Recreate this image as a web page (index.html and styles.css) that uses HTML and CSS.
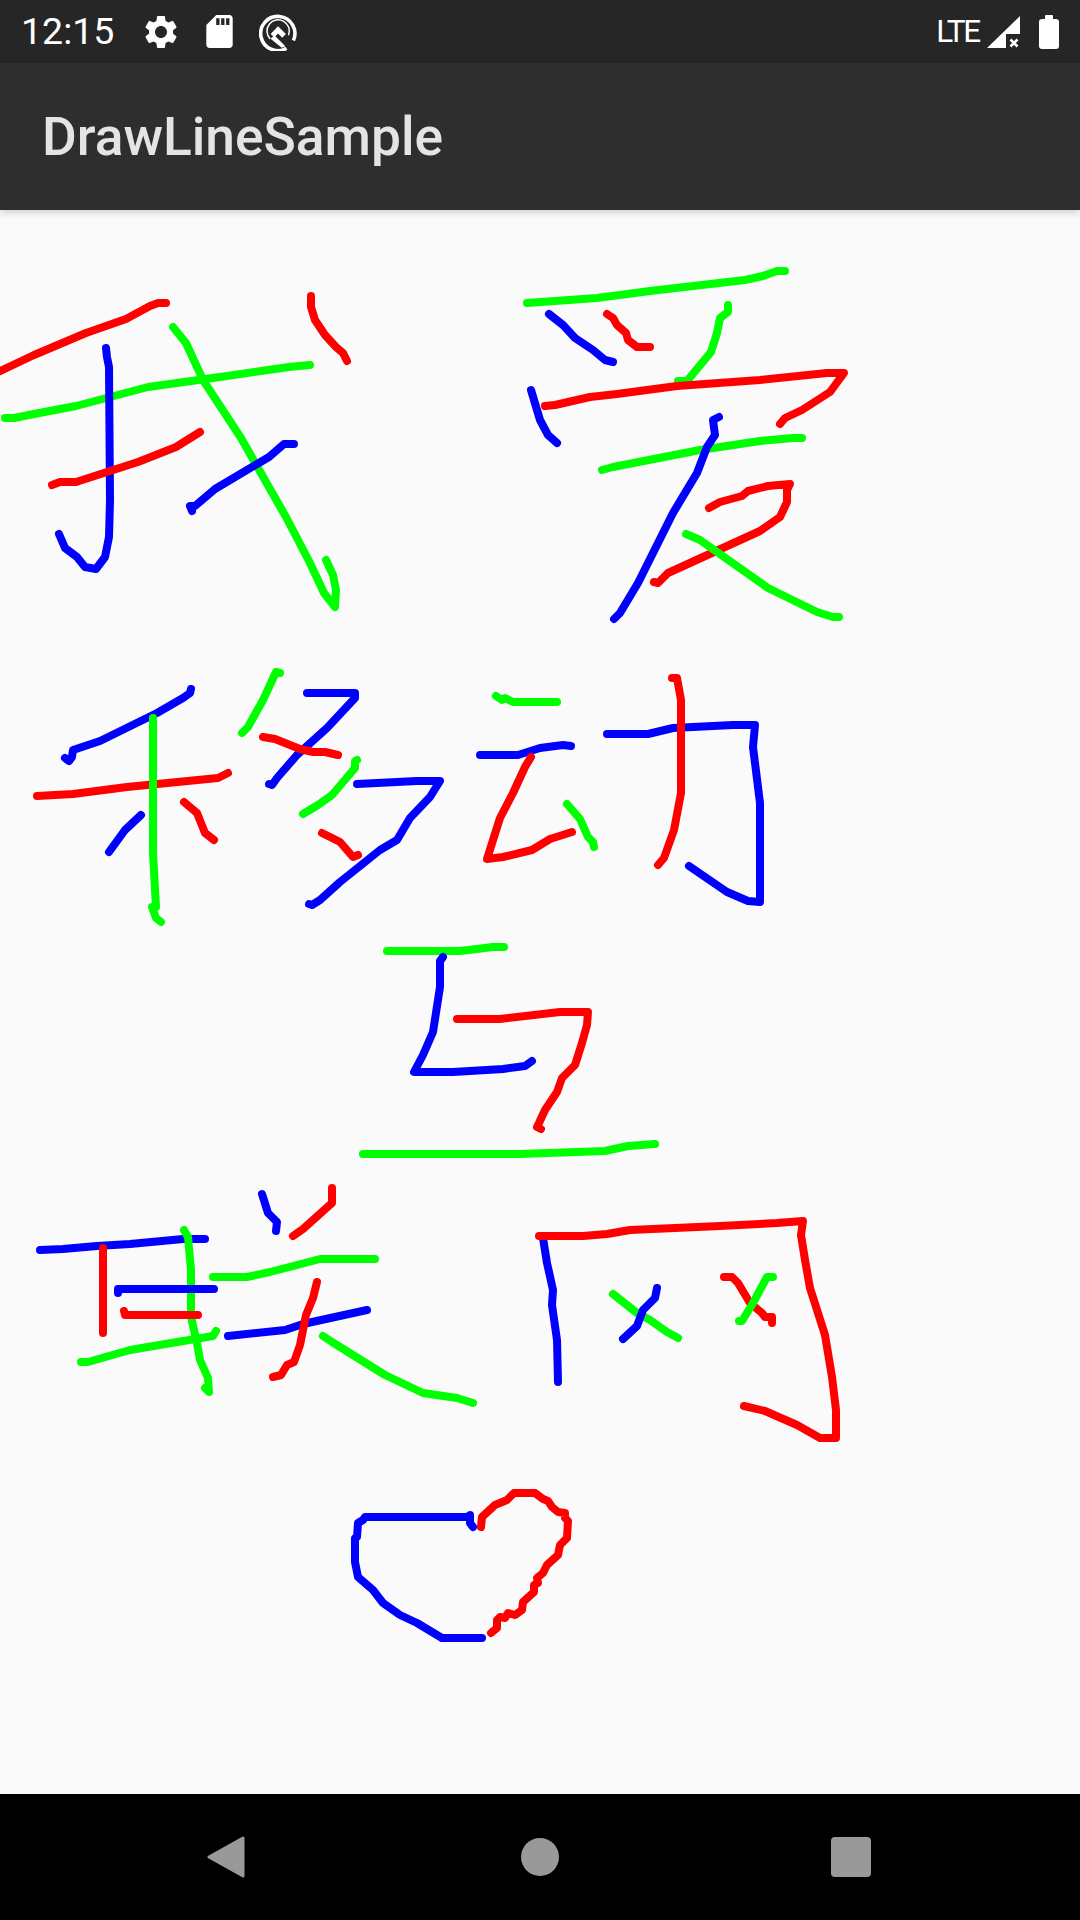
FILE: index.html
```html
<!DOCTYPE html>
<html lang="en">

<head>
    <meta charset="UTF-8">
    <meta name="viewport" content="width=device-width, initial-scale=1.0">
    <title>DrawLineSample</title>
    <link rel="stylesheet" href="styles.css">
</head>

<body>
    <div class="status-bar">
        <div class="status-left">
            <span class="clock">12:15</span>
            <svg class="icon-gear" viewBox="0 0 24 24">
                <path d="M19.14 12.94c.04-.3.06-.61.06-.94 0-.32-.02-.64-.07-.94l2.03-1.58c.18-.14.23-.41.12-.61l-1.92-3.32c-.12-.22-.37-.29-.59-.22l-2.39.96c-.5-.38-1.03-.7-1.62-.94l-.36-2.54c-.04-.24-.24-.41-.48-.41h-3.84c-.24 0-.43.17-.47.41l-.36 2.54c-.59.24-1.13.57-1.62.94l-2.39-.96c-.22-.08-.47 0-.59.22L2.74 8.87c-.12.21-.08.47.12.61l2.03 1.58c-.05.3-.09.63-.09.94s.02.64.07.94l-2.03 1.58c-.18.14-.23.41-.12.61l1.92 3.32c.12.22.37.29.59.22l2.39-.96c.5.38 1.03.7 1.62.94l.36 2.54c.05.24.24.41.48.41h3.84c.24 0 .44-.17.47-.41l.36-2.54c.59-.24 1.13-.56 1.62-.94l2.39.96c.22.08.47 0 .59-.22l1.92-3.32c.12-.22.07-.47-.12-.61l-2.01-1.58zM12 15.6c-1.98 0-3.6-1.62-3.6-3.6s1.62-3.6 3.6-3.6 3.6 1.62 3.6 3.6-1.62 3.6-3.6 3.6z" />
            </svg>
            <svg class="icon-sd" viewBox="4 2 16 20">
                <path d="M18 2h-8L4.02 8 4 20c0 1.1.9 2 2 2h12c1.1 0 2-.9 2-2V4c0-1.1-.9-2-2-2zm-6 6h-2V4h2v4zm3 0h-2V4h2v4zm3 0h-2V4h2v4z" />
            </svg>
            <svg class="icon-q" viewBox="0 0 36 36">
                <path class="q-line" d="M26 33.4A16.2 16.2 0 1 1 32.6 26" />
                <path class="q-thin" d="M10.6 24.5A10.6 10.6 0 1 1 28 21" />
                <path d="M18 12.5L25.5 20 22 23.5 18 19.5 14.5 23 11 20z" />
                <path d="M11 24.5L14.5 21 25 31.5 21.5 33z" />
            </svg>
        </div>
        <div class="status-right">
            <span class="network">LTE</span>
            <svg class="icon-signal" viewBox="0 0 33 32">
                <path d="M0 32L33 0V18H19V32z" />
                <path class="x-mark" d="M23.5 23.5L30.5 30.5M30.5 23.5L23.5 30.5" />
            </svg>
            <div class="battery"></div>
        </div>
    </div>

    <div class="toolbar">
        <h1>DrawLineSample</h1>
    </div>

    <svg class="canvas" viewBox="0 210 1080 1584">
        <!-- wo -->
        <polyline class="red" points="-4,373 34,355 86,333 126,319 150,306 158,303 166,303" />
        <polyline class="green" points="5,418 14,418 34,414 76,406 148,387 220,377 289,367 310,365" />
        <polyline class="blue" points="106,348 107,357 109,367 110,500 109,537 105,557 96,569 85,567 77,557 65,548 59,534" />
        <polyline class="red" points="52,485 60,482 76,482 138,462 176,447 200,432" />
        <polyline class="green" points="173,327 186,343 203,380 241,438 286,517 310,563 324,593 335,607 336,590 333,575 326,560" />
        <polyline class="blue" points="192,511 190,506 195,506 215,489 269,457 284,444 294,444" />
        <polyline class="red" points="311,296 311,307 315,320 325,335 336,347 343,353 347,361" />

        <!-- ai -->
        <polyline class="green" points="527,303 597,298 650,291 745,280 763,276 777,271 785,271" />
        <polyline class="blue" points="549,314 563,325 575,338 593,350 605,360 613,362" />
        <polyline class="red" points="607,314 613,318 617,325 626,333 628,340 637,347 650,347" />
        <polyline class="green" points="728,305 728,312 720,318 717,333 711,352 687,381 678,381" />
        <polyline class="blue" points="531,390 540,420 548,435 557,443" />
        <polyline class="red" points="545,406 555,405 590,397 617,394 677,386 760,380 827,373 844,373 830,392 802,410 785,418 780,424" />
        <polyline class="green" points="602,470 613,467 700,450 760,441 793,438 802,438" />
        <polyline class="blue" points="614,619 620,613 638,583 673,513 697,473 707,447 715,435 713,420 719,417" />
        <polyline class="red" points="709,508 720,502 742,496 748,491 768,486 790,484 787,490 787,502 780,517 760,531 668,573 658,583 654,582" />
        <polyline class="green" points="686,534 700,540 717,552 768,588 817,612 833,617 839,617" />

        <!-- yi -->
        <polyline class="blue" points="191,689 190,693 183,698 157,713 100,741 73,750 72,757 69,761 65,758" />
        <polyline class="red" points="37,796 73,794 127,787 218,778 228,773" />
        <polyline class="green" points="153,718 153,853 156,907 152,907 156,918 161,922" />
        <polyline class="blue" points="141,815 125,830 109,852" />
        <polyline class="red" points="184,802 197,813 205,833 214,840" />
        <polyline class="green" points="280,673 276,672 263,700 248,727 242,733" />
        <polyline class="blue" points="307,693 355,693 355,698 327,728 297,755 277,778 272,785 269,784" />
        <polyline class="red" points="263,737 275,739 300,749 313,752 325,752 338,755" />
        <polyline class="green" points="357,760 355,761 355,768 332,795 318,805 303,814" />
        <polyline class="blue" points="357,784 417,781 440,781 430,797 410,818 397,840 380,850 340,882 320,900 312,905 309,904" />
        <polyline class="red" points="322,833 340,842 353,857 358,855" />

        <!-- dong -->
        <polyline class="green" points="496,696 502,700 505,698 513,702 557,702" />
        <polyline class="blue" points="480,755 518,755 540,748 563,745 571,746" />
        <polyline class="red" points="531,757 525,767 513,793 500,818 487,859 503,857 532,850 550,839 572,832" />
        <polyline class="green" points="567,804 580,819 588,837 593,842 594,847" />
        <polyline class="blue" points="607,734 648,734 673,728 733,725 755,725 753,747 760,803 760,902 748,901 727,892 689,866" />
        <polyline class="red" points="672,678 677,678 681,700 681,793 674,830 664,858 658,865" />

        <!-- hu -->
        <polyline class="green" points="387,951 460,951 493,947 504,947" />
        <polyline class="blue" points="443,957 440,961 440,987 433,1032 423,1055 414,1072 453,1072 503,1069 525,1066 532,1061" />
        <polyline class="red" points="457,1019 500,1019 560,1012 588,1012 587,1025 582,1043 575,1065 562,1078 557,1092 545,1110 539,1123 537,1127 541,1129" />
        <polyline class="green" points="363,1154 520,1154 605,1151 628,1146 655,1144" />

        <!-- lian -->
        <polyline class="blue" points="40,1250 63,1249 97,1246 130,1244 183,1239 205,1239" />
        <polyline class="red" points="103,1248 103,1333" />
        <polyline class="green" points="184,1230 188,1237 191,1270 191,1317 197,1343 200,1360 208,1378 209,1392 205,1388" />
        <polyline class="blue" points="118,1293 118,1289 214,1289" />
        <polyline class="red" points="124,1311 125,1315 198,1315" />
        <polyline class="green" points="81,1362 88,1362 130,1350 213,1336 216,1331" />
        <polyline class="blue" points="262,1194 268,1213 277,1222 276,1231" />
        <polyline class="red" points="332,1188 332,1203 303,1229 293,1236" />
        <polyline class="green" points="213,1277 247,1277 270,1272 320,1259 375,1259" />
        <polyline class="blue" points="228,1336 285,1330 303,1324 367,1310" />
        <polyline class="red" points="317,1282 313,1298 306,1315 300,1345 294,1362 287,1365 281,1375 273,1377" />
        <polyline class="green" points="323,1336 332,1342 385,1375 423,1393 457,1398 473,1403" />

        <!-- wang -->
        <polyline class="blue" points="543,1238 547,1263 553,1290 552,1305 557,1340 558,1382" />
        <polyline class="red" points="539,1236 583,1236 607,1234 630,1230 720,1226 777,1223 803,1221 801,1235 805,1260 810,1288 825,1335 832,1377 836,1410 836,1438 820,1438 797,1425 765,1411 744,1406" />
        <polyline class="green" points="613,1294 637,1313 650,1320 667,1332 678,1338" />
        <polyline class="blue" points="657,1288 655,1298 643,1310 637,1326 623,1339" />
        <polyline class="red" points="724,1277 732,1277 738,1283 750,1303 762,1313 765,1317 772,1317 772,1323" />
        <polyline class="green" points="739,1321 742,1321 753,1303 767,1277 773,1277" />

        <!-- heart -->
        <polyline class="blue" points="473,1527 470,1523 470,1515 467,1517 365,1517 363,1520 358,1523 357,1537 355,1538 355,1562 358,1577 373,1590 383,1603 400,1615 417,1623 442,1638 482,1638" />
        <polyline class="red" points="481,1527 482,1517 495,1505 507,1500 514,1493 535,1493 543,1499 548,1501 552,1507 558,1512 565,1513 565,1518 568,1521 567,1538 560,1545 558,1555 547,1565 543,1573 537,1578 538,1583 534,1585 534,1592 523,1602 522,1610 515,1615 508,1613 505,1618 500,1617 497,1620 497,1628 491,1633" />
    </svg>

    <div class="nav-bar">
        <svg class="nav-back" viewBox="0 0 38 42">
            <path d="M2 21L36 2V40z" />
        </svg>
        <div class="nav-home"></div>
        <div class="nav-recent"></div>
    </div>
</body>

</html>
```

FILE: styles.css
```css
* {
    margin: 0;
    padding: 0;
    box-sizing: border-box;
}

body {
    width: 1080px;
    height: 1920px;
    overflow: hidden;
    display: flex;
    flex-direction: column;
    background-color: #fafafa;
    font-family: Roboto, "Liberation Sans", sans-serif;
}

.status-bar {
    height: 63px;
    flex: none;
    display: flex;
    justify-content: space-between;
    align-items: center;
    padding: 0 21px;
    background-color: #262626;
    color: #fff;
}

.status-left,
.status-right {
    display: flex;
    align-items: center;
}

.status-bar svg {
    fill: #fff;
    display: block;
}

.clock {
    font-size: 37.5px;
    line-height: 63px;
    width: 120px;
}

.icon-gear {
    width: 40px;
    height: 40px;
    margin-right: 25px;
}

.icon-sd {
    width: 27px;
    height: 33px;
    margin-right: 26px;
}

.icon-q {
    width: 38px;
    height: 38px;
}

.q-line,
.q-thin {
    fill: none;
    stroke: #fff;
    stroke-width: 3.4;
}

.q-thin {
    stroke-width: 1.4;
}

.network {
    font-size: 31.5px;
    line-height: 63px;
    letter-spacing: -2.2px;
    margin-right: 8px;
}

.icon-signal {
    width: 33px;
    height: 32px;
    margin-right: 19px;
}

.status-bar .x-mark {
    fill: none;
    stroke: #fff;
    stroke-width: 2.6;
}

.battery {
    width: 20px;
    height: 30px;
    margin-top: 4px;
    border-radius: 3px;
    background-color: #fff;
    position: relative;
}

.battery::before {
    content: "";
    position: absolute;
    left: 6px;
    top: -4px;
    width: 8px;
    height: 5px;
    border-radius: 1px 1px 0 0;
    background-color: #fff;
}

.toolbar {
    height: 147px;
    flex: none;
    display: flex;
    align-items: center;
    padding-left: 42px;
    background-color: #2e2e2e;
    box-shadow: 0 2px 8px rgba(0, 0, 0, 0.2);
    position: relative;
}

.toolbar h1 {
    font-size: 53.3px;
    font-weight: 500;
    color: #e4e4e4;
}

.canvas {
    width: 1080px;
    height: 1584px;
    flex: none;
    display: block;
}

.canvas polyline {
    fill: none;
    stroke-width: 8;
    stroke-linecap: round;
    stroke-linejoin: round;
}

.red {
    stroke: #ff0000;
}

.green {
    stroke: #00ff00;
}

.blue {
    stroke: #0000ff;
}

.nav-bar {
    height: 126px;
    flex: none;
    background-color: #000;
    display: flex;
    align-items: center;
}

.nav-back {
    width: 38px;
    height: 42px;
    margin-left: 207px;
    fill: #999;
    stroke: #999;
    stroke-width: 3;
    stroke-linejoin: round;
}

.nav-home {
    width: 38px;
    height: 38px;
    margin-left: 276px;
    border-radius: 50%;
    background-color: #999;
}

.nav-recent {
    width: 40px;
    height: 40px;
    margin-left: 272px;
    border-radius: 4px;
    background-color: #999;
}
```
